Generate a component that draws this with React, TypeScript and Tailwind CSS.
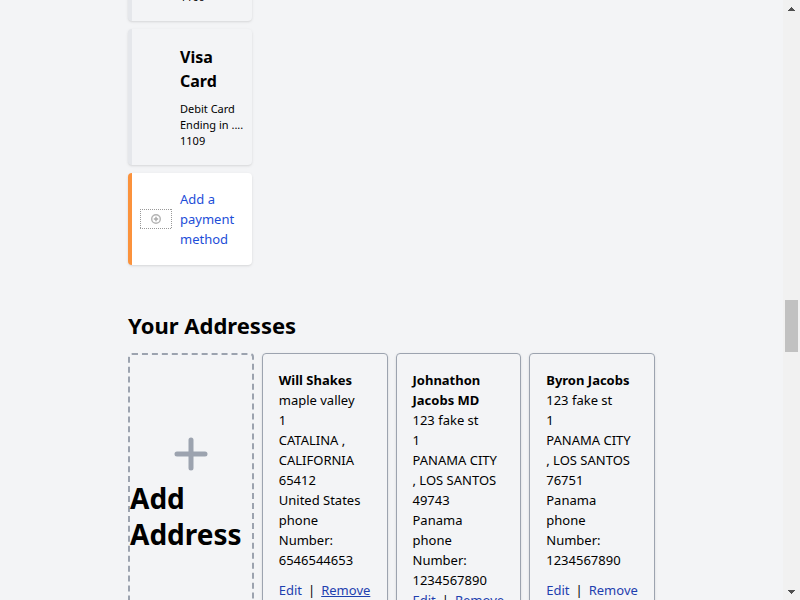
import React from "react";

type Address = {
  name: string[];
  lines: string[];
  activeRemove?: boolean;
};

const addresses: Address[] = [
  {
    name: ["Will Shakes"],
    lines: ["maple valley", "1", "CATALINA ,", "CALIFORNIA", "65412", "United States", "phone", "Number:", "6546544653"],
    activeRemove: true,
  },
  {
    name: ["Johnathon", "Jacobs MD"],
    lines: ["123 fake st", "1", "PANAMA CITY", ", LOS SANTOS", "49743", "Panama", "phone", "Number:", "1234567890"],
  },
  {
    name: ["Byron Jacobs"],
    lines: ["123 fake st", "1", "PANAMA CITY", ", LOS SANTOS", "76751", "Panama", "phone", "Number:", "1234567890"],
  },
];

function PaymentCard() {
  return (
    <li className="flex rounded border-l-4 border-[#e5e7eb] bg-[#f3f4f6] px-2 py-4 shadow-sm">
      <div className="w-8 shrink-0" />
      <div className="ml-2">
        <h3 className="text-base leading-6 font-bold">
          Visa
          <br />
          Card
        </h3>
        <p className="mt-2 text-[11px] leading-4 whitespace-nowrap">
          Debit Card
          <br />
          Ending in ....
          <br />
          1109
        </p>
      </div>
    </li>
  );
}

function AddPayment() {
  return (
    <li className="flex items-center rounded border-l-4 border-[#fb923c] bg-white px-2 py-4 shadow-sm">
      <svg className="h-5 w-8 shrink-0" viewBox="0 0 32 20" fill="none" aria-hidden="true">
        <path
          d="M0 .5h32M0 19.5h32M.5 0v20M31.5 0v20"
          stroke="#999"
          strokeDasharray="1 1"
          shapeRendering="crispEdges"
        />
        <circle cx="16" cy="10" r="4.3" stroke="#b3b3b3" strokeWidth="1.4" />
        <path d="M16 7.8v4.4M13.8 10h4.4" stroke="#aaa" strokeWidth="1.4" />
      </svg>
      <a href="#payment" className="ml-2 text-[13px] leading-5 text-[#1d4ed8]">
        Add a payment method
      </a>
    </li>
  );
}

function AddressCard({ address }: { address: Address }) {
  return (
    <li className="flex flex-col rounded border border-[#9ca3af] p-4 text-[13px] leading-5 whitespace-nowrap shadow-sm">
      {address.name.map((part) => (
        <strong key={part} className="font-bold">
          {part}
        </strong>
      ))}
      {address.lines.map((line) => (
        <span key={line}>{line}</span>
      ))}
      <div className="flex flex-1 items-center">
        <a href="#edit" className="text-[#1e40af]">
          Edit
        </a>
        <span className="px-1.5">|</span>
        <a href="#remove" className={address.activeRemove ? "text-[#1e40af] underline" : "text-[#1e40af]"}>
          Remove
        </a>
      </div>
    </li>
  );
}

function ScrollBar() {
  return (
    <div className="flex w-[17px] shrink-0 flex-col items-center bg-[#f1f1f1]">
      <button aria-label="Scroll up" className="flex h-[17px] w-full items-center justify-center">
        <svg width="7" height="4" viewBox="0 0 7 4" fill="#505050" shapeRendering="crispEdges">
          <path d="M3 0h1v1h1v1h1v1h1v1H0V3h1V2h1V1h1z" />
        </svg>
      </button>
      <div className="flex w-full flex-1 flex-col items-center">
        <div className="grow-[283]" />
        <div className="h-[52px] w-[13px] bg-[#c1c1c1]" />
        <div className="grow-[231]" />
      </div>
      <button aria-label="Scroll down" className="flex h-[17px] w-full items-center justify-center">
        <svg width="7" height="4" viewBox="0 0 7 4" fill="#505050" shapeRendering="crispEdges">
          <path d="M0 0h7v1H6v1H5v1H4v1H3V3H2V2H1V1H0z" />
        </svg>
      </button>
    </div>
  );
}

export default function App() {
  return (
    <div className="flex h-screen overflow-hidden bg-[#f3f4f6] font-['Noto_Sans','Open_Sans',sans-serif] text-black">
      <main className="-mt-[115px] min-w-0 flex-1 px-32">
        <ul className="flex w-1/4 flex-col gap-2 pr-2">
          <PaymentCard />
          <PaymentCard />
          <AddPayment />
        </ul>
        <h2 className="mt-11 text-[22px] leading-8 font-bold">Your Addresses</h2>
        <ul className="mt-3 grid grid-cols-4 gap-2">
          <li className="flex rounded border-2 border-dashed border-[#9ca3af]">
            <button className="flex flex-1 flex-col items-center justify-center text-left">
              <svg className="size-13 text-[#9ca3af]" viewBox="0 0 52 52" fill="none" stroke="currentColor" strokeWidth="5" strokeLinecap="round" aria-hidden="true">
                <path d="M26 12v28M12 26h28" />
              </svg>
              <span className="w-full text-[28px] leading-9 font-bold">
                Add
                <br />
                Address
              </span>
            </button>
          </li>
          {addresses.map((address) => (
            <AddressCard key={address.name[0]} address={address} />
          ))}
        </ul>
      </main>
      <ScrollBar />
    </div>
  );
}
